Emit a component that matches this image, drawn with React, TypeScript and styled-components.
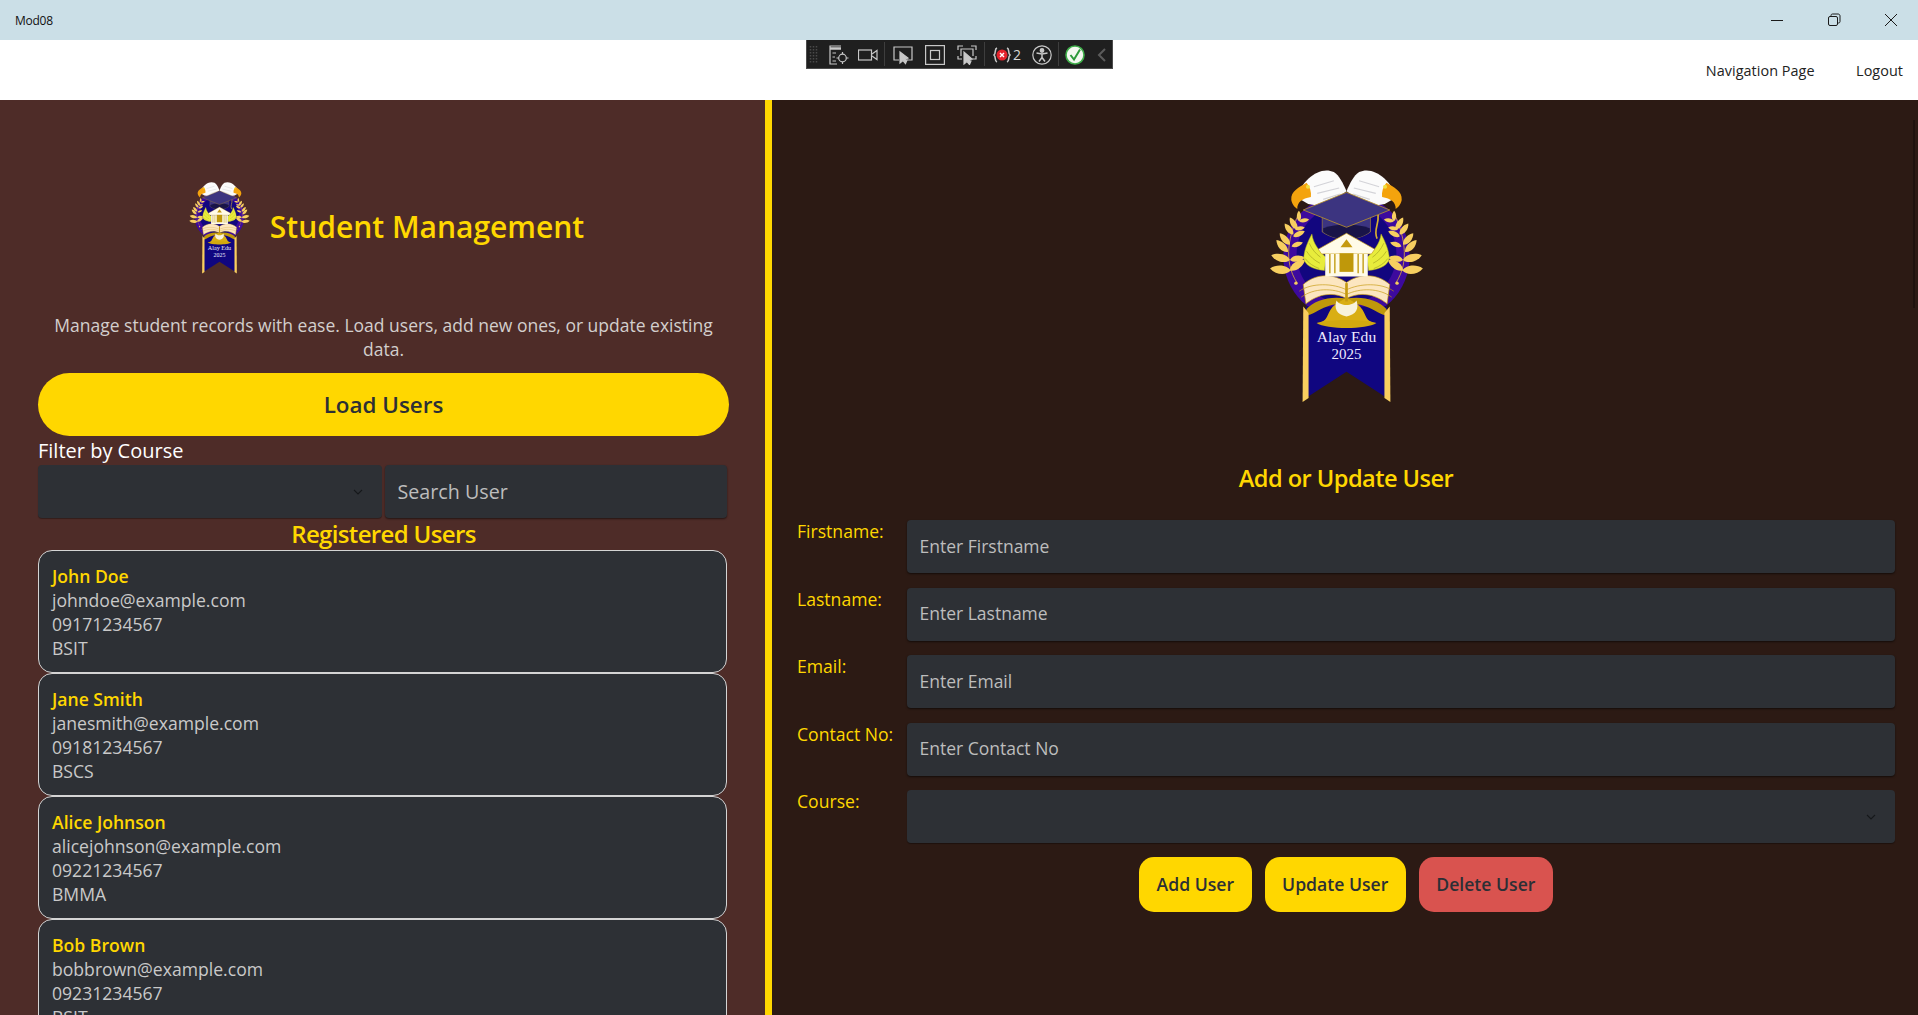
import React from "react";
import styled, { createGlobalStyle } from "styled-components";

const Global = createGlobalStyle`
  html, body { margin: 0; padding: 0; height: 100%; overflow: hidden; }
  body { font-family: "Open Sans", "Noto Sans", sans-serif; }
  #root { height: 100%; }
  * { box-sizing: border-box; }
`;

const Shell = styled.div`
  position: relative;
  height: 1015px;
  display: flex;
  flex-direction: column;
  overflow: hidden;
`;
const TitleBar = styled.header`
  height: 40px;
  flex: none;
  background: #cbdfe7;
  display: flex;
  align-items: center;
  justify-content: space-between;
  padding-left: 15px;
  font-size: 12px;
  letter-spacing: -0.25px;
  color: #111;
`;
const WindowButtons = styled.div`
  display: flex;
  align-items: center;
  padding-right: 18px;
  gap: 39px;
`;
const WinIcon = styled.svg`
  width: 18px;
  height: 18px;
  fill: none;
  stroke: #1a1a1a;
  stroke-width: 1;
`;
const NavBar = styled.nav`
  height: 60px;
  flex: none;
  background: #fff;
  display: flex;
  align-items: center;
  justify-content: flex-end;
  gap: 41.5px;
  padding: 0 15px 0 0;
  font-size: 14.4px;
  color: #222;
`;
const NavLink = styled.span`
  letter-spacing: 0.05px;
`;
const Main = styled.main`
  flex: 1;
  min-height: 0;
  display: flex;
`;
const LeftPanel = styled.section`
  width: 772px;
  flex: none;
  background: #4e2c28;
  border-right: 7px solid #ffd700;
  padding: 82px 36px 0 38px;
  overflow: hidden;
`;
const RightPanel = styled.section`
  position: relative;
  flex: 1;
  background: #2c1a14;
  padding: 70px 23px 0 25px;
  overflow: hidden;
`;
const Brand = styled.div`
  display: flex;
  align-items: center;
  justify-content: center;
  gap: 20px;
  height: 92px;
  margin-left: 6px;
`;
const BrandTitle = styled.h1`
  margin: 0 0 3px;
  font-size: 30px;
  line-height: 40px;
  font-weight: 600;
  color: #ffd700;
`;
const SmallLogo = styled.svg`
  width: 61px;
  height: 92px;
  flex: none;
`;
const BigLogo = styled.svg`
  display: block;
  width: 153px;
  height: 233px;
  margin: 0 auto;
`;
const Lead = styled.p`
  margin: 39px 0 12px;
  text-align: center;
  font-size: 17.5px;
  line-height: 24px;
  color: #d3cfcd;
`;
const LoadButton = styled.button`
  display: block;
  width: 100%;
  height: 63px;
  border: 0;
  border-radius: 32px;
  background: #ffd700;
  color: #2c2f35;
  font: 600 22.4px "Open Sans", sans-serif;
  padding-bottom: 2px;
`;
const FilterLabel = styled.label`
  display: block;
  margin-top: 1px;
  height: 28px;
  font-size: 20px;
  line-height: 27px;
  color: #fff;
`;
const FilterRow = styled.div`
  display: grid;
  grid-template-columns: 344px 342px;
  gap: 3px;
  height: 53px;
`;
const SelectWrap = styled.div`
  position: relative;
  height: 53px;
`;
const Select = styled.select`
  appearance: none;
  display: block;
  width: 100%;
  height: 100%;
  border: 0;
  border-radius: 4px;
  background: #2d3035;
  color: #ccc;
  box-shadow: 0 1px 1px rgba(0, 0, 0, 0.35);
`;
const Chevron = styled.svg`
  position: absolute;
  top: 22px;
  right: 18px;
  width: 12px;
  height: 10px;
  fill: none;
  stroke: #16181b;
  stroke-width: 1.1;
  pointer-events: none;
`;
const Field = styled.input<{ $large?: boolean }>`
  display: block;
  width: 100%;
  height: 53px;
  padding: 0 12.5px ${(p) => (p.$large ? 0 : 2)}px;
  border: 0;
  border-radius: 4px;
  background: #2d3035;
  color: #ddd;
  font: 400 ${(p) => (p.$large ? 19.7 : 17.5)}px "Open Sans", sans-serif;
  box-shadow: 0 1px 2px rgba(0, 0, 0, 0.55);
  &::placeholder { color: #bdbdbd; opacity: 1; }
`;
const ListTitle = styled.h2`
  margin: 0;
  height: 32px;
  text-align: center;
  font-size: 24px;
  line-height: 32px;
  font-weight: 600;
  letter-spacing: -0.65px;
  color: #ffd700;
`;
const CardList = styled.div`
  display: flex;
  flex-direction: column;
  padding-right: 2px;
`;
const Card = styled.article`
  height: 123px;
  flex: none;
  border: 1px solid #d4d4d4;
  border-radius: 14px;
  background: #2d3035;
  padding: 13px 13px 0;
  font-size: 17.6px;
  line-height: 24px;
  color: #c9c9c9;
`;
const CardName = styled.div`
  font-weight: 600;
  color: #ffd700;
`;
const FormTitle = styled.h2`
  margin: 59px 0 26px;
  text-align: center;
  font-size: 23.6px;
  line-height: 32px;
  font-weight: 600;
  letter-spacing: -0.55px;
  color: #ffd700;
`;
const FormRow = styled.div`
  display: grid;
  grid-template-columns: 110px 1fr;
  margin-bottom: 14.5px;
`;
const FormLabel = styled.label`
  font-size: 17.6px;
  line-height: 22px;
  color: #ffd700;
`;
const ButtonRow = styled.div`
  display: flex;
  justify-content: center;
  gap: 13px;
  margin: -1px 1px 0 1px;
`;
const ActionButton = styled.button<{ $danger?: boolean }>`
  height: 55px;
  padding: 0 17.5px 1px;
  border: 0;
  border-radius: 15px;
  background: ${(p) => (p.$danger ? "#d9534f" : "#ffd700")};
  color: #2c2f35;
  font: 600 17.6px "Open Sans", sans-serif;
`;
const ScrollThumb = styled.div`
  position: absolute;
  top: 20px;
  right: 3px;
  width: 2.5px;
  height: 188px;
  background: #1f120e;
`;
const Toolbar = styled.div`
  position: absolute;
  top: 40px;
  left: 806px;
  width: 307px;
  height: 29px;
  display: flex;
  align-items: center;
  background: #1f1f1f;
  border: 1px solid #4c4c4c;
  border-top: 0;
  padding: 2px 0 0 2px;
  color: #c8c8c8;
`;
const ToolIcon = styled.svg<{ $gap: number; $w: number }>`
  flex: none;
  margin-left: ${(p) => p.$gap}px;
  width: ${(p) => p.$w}px;
  height: 20px;
  fill: none;
  stroke: #c8c8c8;
  stroke-width: 1.2;
`;
const ToolSep = styled.span<{ $gap: number }>`
  flex: none;
  margin: -2px 0 0 ${(p) => p.$gap}px;
  width: 1px;
  height: 24px;
  background: #3e3e3e;
`;
const ToolCount = styled.span`
  margin-left: 2px;
  font-size: 14px;
  line-height: 20px;
  color: #d8d8d8;
`;

const laurel: [number, number, number, number][] = [
  [152, 362, 186, 62], [150, 330, 194, 58], [144, 306, 226, 50], [150, 284, 228, 46],
  [160, 254, 232, 42], [172, 238, 238, 42], [178, 214, 268, 32],
  [150, 362, 325, 56], [150, 330, 352, 46], [155, 290, 340, 36], [160, 260, 335, 38],
  [165, 238, 350, 30], [178, 214, 350, 30],
];
const feathers = "M238 356C222 350 205 340 196 326M240 340C224 332 210 320 200 304M242 322C228 312 216 298 208 280";

function Half() {
  return (
    <>
      <path d="M170 142C186 90 240 46 282 66C298 76 310 100 320 124L255 170L205 162Z" fill="#fbfbfb" />
      <path d="M222 110L282 92M232 130L298 114M250 148L300 132" stroke="#d3d3d8" strokeWidth="3.5" fill="none" />
      <path d="M200 98C178 112 152 122 154 150C157 165 165 172 172 177C172 156 186 146 213 141C215 125 210 110 200 98Z" fill="#f4a30d" />
      <circle cx="204" cy="110" r="6" fill="#f0e040" />
      <path d="M172 400C126 330 150 250 176 192" stroke="#d9a53a" strokeWidth="2.5" fill="none" />
      <circle cx="168" cy="400" r="5" fill="#f7cf60" />
      {laurel.map(([x, y, a, l], i) => (
        <path
          key={i}
          transform={`translate(${x} ${y}) rotate(${a}) scale(${l / 60})`}
          d="M0 0C12 -17 42 -17 60 0C42 15 12 15 0 0Z"
          fill="#f7cf60"
        />
      ))}
      <path d="M254 362C214 358 188 342 192 318C194 298 204 274 216 252C220 284 240 304 258 322Z" fill="#e8ec3c" stroke="#a5a520" strokeWidth="1.5" />
      <path d={feathers} stroke="#a5a520" strokeWidth="2" fill="none" />
      <path d="M190 404C225 372 278 368 320 398V446C280 425 235 432 198 462Z" fill="#fce6c0" stroke="#c59a10" strokeWidth="2" />
      <path d="M178 424C215 398 280 400 320 420M184 442C222 414 280 414 320 434" stroke="#c59a10" strokeWidth="2" fill="none" />
      <path d="M320 446C270 438 225 450 200 478L195 497C212 500 232 480 262 470C285 462 305 462 320 462Z" fill="#bf980a" />
      <path d="M190 470L206 490V745L188 757Z" fill="#f9cf5f" />
    </>
  );
}

function LogoArt() {
  return (
    <>
      <circle cx="320" cy="320" r="190" fill="#3d0a9e" />
      <circle cx="320" cy="312" r="150" fill="#12067f" />
      <path d="M198 470H442V745L320 666L198 745Z" fill="#100680" />
      <Half />
      <g transform="translate(640 0) scale(-1 1)">
        <Half />
      </g>
      <path d="M247 196H392V246C350 275 290 275 247 246Z" fill="#3c3480" stroke="#a98a36" strokeWidth="2" />
      <path d="M250 235C290 220 350 220 390 235V246C350 275 290 275 250 246Z" fill="#191448" />
      <path d="M320 127L450 180L320 232L190 180Z" fill="#3c3480" stroke="#b8912e" strokeWidth="2.5" />
      <path d="M415 195C418 225 400 240 412 266" stroke="#d8b030" strokeWidth="5" fill="none" />
      <path d="M320 250L405 298L395 312H245L235 298Z" fill="#fffbe8" stroke="#c59a10" strokeWidth="2" />
      <path d="M320 268L338 292H302Z" fill="#c59a10" />
      <rect x="256" y="312" width="128" height="68" fill="#fffbe8" />
      <rect x="299" y="310" width="42" height="56" fill="#bf980a" />
      <path d="M270 312V370M285 312V370M355 312V370M370 312V370" stroke="#bf980a" strokeWidth="4" />
      <path d="M320 440C330 455 352 455 368 480C382 505 380 512 400 518C390 535 250 535 240 518C260 512 258 505 272 480C288 455 310 455 320 440Z" fill="#d9ae14" />
      <path d="M290 452C300 470 340 470 350 452C358 475 350 495 320 500C290 495 282 475 290 452Z" fill="#f8f2dc" />
      <path d="M230 520C270 508 370 508 410 520C380 540 260 540 230 520Z" fill="#d2a80e" />
      <path d="M320 400V455" stroke="#c59a10" strokeWidth="8" />
      <text x="320" y="578" textAnchor="middle" fontFamily="'Liberation Serif', serif" fontSize="47" fill="#efeaff">
        Alay Edu
      </text>
      <text x="320" y="628" textAnchor="middle" fontFamily="'Liberation Serif', serif" fontSize="45" fill="#efeaff">
        2025
      </text>
    </>
  );
}

const students = [
  ["John Doe", "johndoe@example.com", "09171234567", "BSIT"],
  ["Jane Smith", "janesmith@example.com", "09181234567", "BSCS"],
  ["Alice Johnson", "alicejohnson@example.com", "09221234567", "BMMA"],
  ["Bob Brown", "bobbrown@example.com", "09231234567", "BSIT"],
];
const fields = [
  ["Firstname:", "Enter Firstname"],
  ["Lastname:", "Enter Lastname"],
  ["Email:", "Enter Email"],
  ["Contact No:", "Enter Contact No"],
];

function DownChevron() {
  return (
    <Chevron viewBox="0 0 12 10">
      <path d="M2 3L6 7L10 3" />
    </Chevron>
  );
}

export default function App() {
  return (
    <>
      <Global />
      <Shell>
        <TitleBar>
          <span>Mod08</span>
          <WindowButtons>
            <WinIcon viewBox="0 0 18 18">
              <path d="M3 9.5H15" />
            </WinIcon>
            <WinIcon viewBox="0 0 18 18">
              <rect x="3.5" y="5.5" width="9" height="9" rx="1.5" />
              <path d="M6 5V4.5C6 3.5 6.7 3 7.5 3H13C14.2 3 15 3.8 15 5V10.5C15 11.3 14.5 12 13.5 12H13" />
            </WinIcon>
            <WinIcon viewBox="0 0 18 18">
              <path d="M3 3L15 15M15 3L3 15" />
            </WinIcon>
          </WindowButtons>
        </TitleBar>
        <NavBar>
          <NavLink>Navigation Page</NavLink>
          <NavLink>Logout</NavLink>
        </NavBar>
        <Main>
          <LeftPanel>
            <Brand>
              <SmallLogo viewBox="90 60 460 700">
                <LogoArt />
              </SmallLogo>
              <BrandTitle>Student Management</BrandTitle>
            </Brand>
            <Lead>Manage student records with ease. Load users, add new ones, or update existing data.</Lead>
            <LoadButton>Load Users</LoadButton>
            <FilterLabel>Filter by Course</FilterLabel>
            <FilterRow>
              <SelectWrap>
                <Select aria-label="Filter by Course" />
                <DownChevron />
              </SelectWrap>
              <Field $large placeholder="Search User" />
            </FilterRow>
            <ListTitle>Registered Users</ListTitle>
            <CardList>
              {students.map(([name, email, phone, course]) => (
                <Card key={name}>
                  <CardName>{name}</CardName>
                  <div>{email}</div>
                  <div>{phone}</div>
                  <div>{course}</div>
                </Card>
              ))}
            </CardList>
          </LeftPanel>
          <RightPanel>
            <ScrollThumb />
            <BigLogo viewBox="90 60 460 700">
              <LogoArt />
            </BigLogo>
            <FormTitle>Add or Update User</FormTitle>
            {fields.map(([label, placeholder]) => (
              <FormRow key={label}>
                <FormLabel>{label}</FormLabel>
                <Field placeholder={placeholder} />
              </FormRow>
            ))}
            <FormRow>
              <FormLabel>Course:</FormLabel>
              <SelectWrap>
                <Select aria-label="Course" />
                <DownChevron />
              </SelectWrap>
            </FormRow>
            <ButtonRow>
              <ActionButton>Add User</ActionButton>
              <ActionButton>Update User</ActionButton>
              <ActionButton $danger>Delete User</ActionButton>
            </ButtonRow>
          </RightPanel>
        </Main>
        <Toolbar>
          <ToolIcon $gap={0} $w={9} viewBox="0 0 9 20">
            <path d="M1.5 1V19M4.5 1V19M7.5 1V19" stroke="#4a4a4a" strokeWidth="1.5" strokeDasharray="1.5 1.5" />
          </ToolIcon>
          <ToolIcon $gap={11} $w={20} viewBox="0 0 20 20">
            <path d="M12 1H1V19H8" />
            <path d="M1 3.5H12" strokeWidth="2.5" />
            <path d="M3.5 8H7M3.5 12H6M3.5 16H7" />
            <circle cx="13.5" cy="13" r="3.8" />
            <path d="M13.5 7V9M13.5 17V19M7.5 13H9.5M17.5 13H19.5" />
          </ToolIcon>
          <ToolIcon $gap={9} $w={20} viewBox="0 0 20 20">
            <rect x="0.5" y="5" width="13" height="10" />
            <path d="M14 9L19 5.5V14.5L14 11" />
          </ToolIcon>
          <ToolSep $gap={6} />
          <ToolIcon $gap={8} $w={20} viewBox="0 0 20 20">
            <path d="M6 15H1V2H19V15H14" />
            <path d="M7 7V18L10 15.5L12.5 18.5L14 15L11 14.5L15 13Z" fill="#c8c8c8" />
          </ToolIcon>
          <ToolIcon $gap={12} $w={20} viewBox="0 0 20 20">
            <rect x="0.6" y="0.6" width="18.8" height="18.8" />
            <rect x="5.5" y="5.5" width="9" height="9" />
          </ToolIcon>
          <ToolIcon $gap={12} $w={20} viewBox="0 0 20 20">
            <path d="M1 5V1H6M14 1H19V5M1 11V14H5M19 11V14H15" />
            <path d="M4 11V4H16V11" />
            <path d="M7 7V19L10 16.5L12.5 19.5L14 16L11 15.5L15 14Z" fill="#c8c8c8" />
          </ToolIcon>
          <ToolSep $gap={7} />
          <ToolIcon $gap={8} $w={18} viewBox="0 0 18 20">
            <path d="M4 3C1 4 3.5 8 1 10C3.5 12 1 16 4 17M14 3C17 4 14.5 8 17 10C14.5 12 17 16 14 17" strokeWidth="1.6" />
            <circle cx="9" cy="10" r="5.5" fill="#e5232c" stroke="none" />
            <path d="M7 8L11 12M11 8L7 12" stroke="#fff" strokeWidth="1.4" />
          </ToolIcon>
          <ToolCount>2</ToolCount>
          <ToolIcon $gap={11} $w={20} viewBox="0 0 20 20">
            <circle cx="10" cy="10" r="9.2" />
            <circle cx="10" cy="5.5" r="1.8" fill="#c8c8c8" />
            <path d="M4.5 8L10 9L15.5 8M10 9V12.5L7 16.5M10 12.5L13 16.5" strokeWidth="1.5" />
          </ToolIcon>
          <ToolSep $gap={6} />
          <ToolIcon $gap={6} $w={20} viewBox="0 0 20 20">
            <circle cx="10" cy="10" r="9" fill="#f3f8f0" stroke="#3fae4a" strokeWidth="1.6" />
            <path d="M5.5 10L9 14.5L15 4.5" stroke="#2d9a3a" strokeWidth="2" />
          </ToolIcon>
          <ToolIcon $gap={12} $w={10} viewBox="0 0 10 20">
            <path d="M8 4L2 10L8 16" stroke="#5b5b5b" strokeWidth="2" />
          </ToolIcon>
        </Toolbar>
      </Shell>
    </>
  );
}
